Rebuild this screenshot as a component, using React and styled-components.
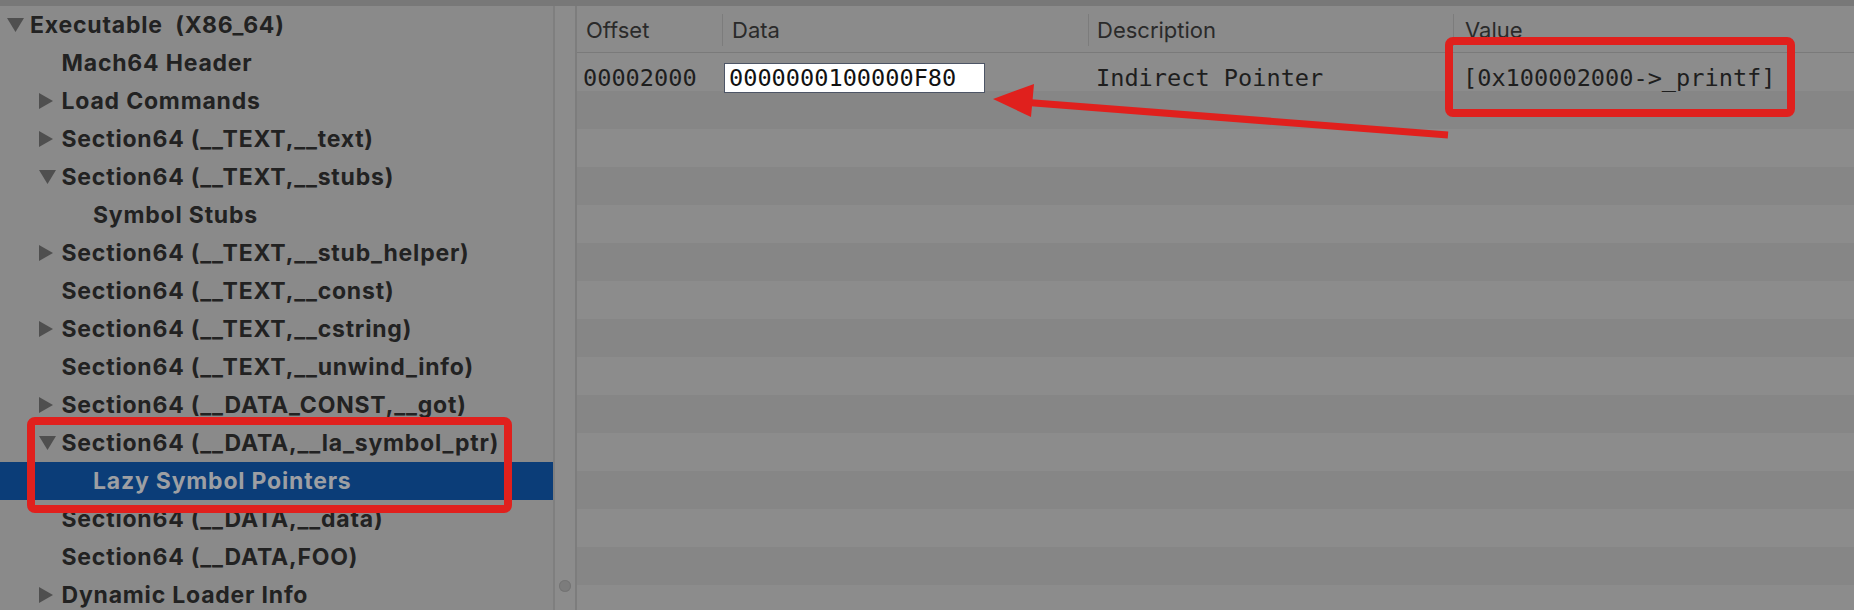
import React from 'react';
import styled, { createGlobalStyle } from 'styled-components';

const GlobalStyle = createGlobalStyle`
  html, body {
    margin: 0;
    padding: 0;
    background: #8a8a8a;
    overflow: hidden;
  }
`;

const Window = styled.div`
  position: relative;
  width: 1854px;
  height: 610px;
  display: flex;
  flex-direction: column;
  overflow: hidden;
  background: #8a8a8a;
`;

const TopBar = styled.div`
  height: 6px;
  flex: none;
  background: #787878;
`;

const Body = styled.div`
  flex: 1;
  display: flex;
  min-height: 0;
`;

const Sidebar = styled.div`
  width: 553px;
  flex: none;
  background: #8a8a8a;
  overflow: hidden;
`;

const TreeRow = styled.div`
  height: 38px;
  display: flex;
  align-items: center;
  padding-left: ${p => 5 + p.level * 31.5}px;
  background: ${p => (p.selected ? '#0b3d78' : 'transparent')};
  color: ${p => (p.selected ? '#9d9fa3' : '#222222')};
  font-family: Inter, "Liberation Sans", sans-serif;
  font-weight: 700;
  font-size: 23px;
  letter-spacing: 0.8px;
  white-space: pre;
`;

const Toggle = styled.span`
  width: 25px;
  flex: none;
  display: flex;
  align-items: center;
  padding-left: 2px;
  box-sizing: border-box;
`;

const Splitter = styled.div`
  width: 24px;
  flex: none;
  box-sizing: border-box;
  border-left: 2px solid #7f7f7f;
  border-right: 2px solid #7d7d7d;
  background: #8c8c8c;
  display: flex;
  flex-direction: column;
  justify-content: flex-end;
  align-items: center;
  padding-bottom: 18px;
`;

const Knob = styled.div`
  width: 12px;
  height: 12px;
  border-radius: 50%;
  background: #7c7c7c;
  box-shadow: inset 0 0 0 1px #747474;
`;

const TablePane = styled.div`
  flex: 1;
  display: flex;
  flex-direction: column;
  min-width: 0;
  overflow: hidden;
`;

const HeaderRow = styled.div`
  height: 46px;
  flex: none;
  display: flex;
  background: #8b8b8b;
  border-bottom: 1px solid #7a7a7a;
`;

const HeaderCell = styled.div`
  position: relative;
  width: ${p => (p.w ? `${p.w}px` : 'auto')};
  flex: ${p => (p.w ? 'none' : '1')};
  box-sizing: border-box;
  display: flex;
  align-items: center;
  padding-left: ${p => p.pad}px;
  padding-top: 2px;
  font-family: Inter, "Liberation Sans", sans-serif;
  font-size: 22px;
  color: #2a2a2a;

  &::before {
    content: '';
    display: ${p => (p.sep ? 'block' : 'none')};
    position: absolute;
    left: 0;
    top: 8px;
    bottom: 6px;
    width: 1px;
    background: #7c7c7c;
  }
`;

const DataRow = styled.div`
  position: relative;
  z-index: ${p => (p.raised ? 1 : 0)};
  height: 38px;
  flex: none;
  display: flex;
  background: ${p => (p.odd ? '#868686' : '#8c8c8c')};
`;

const Cell = styled.div`
  width: ${p => (p.w ? `${p.w}px` : 'auto')};
  flex: ${p => (p.w ? 'none' : '1')};
  box-sizing: border-box;
  display: flex;
  align-items: center;
  padding-left: ${p => p.pad}px;
  padding-top: 12px;
  font-family: "DejaVu Sans Mono", "Liberation Mono", monospace;
  font-size: 23.6px;
  line-height: 26px;
  color: #1e1e1e;
  white-space: pre;
`;

const EditField = styled.div`
  width: 261px;
  height: 30px;
  flex: none;
  box-sizing: border-box;
  background: #ffffff;
  border: 1.5px solid #4d5566;
  display: flex;
  align-items: center;
  padding-left: 4px;
  color: #111;
`;

const Overlay = styled.svg`
  position: absolute;
  top: 0;
  left: 0;
  z-index: 5;
  pointer-events: none;
`;

function Triangle({ open }) {
  return open ? (
    <svg width="17" height="14" viewBox="0 0 17 14">
      <polygon points="0,0 17,0 8.5,14" fill="#4f4f4f" />
    </svg>
  ) : (
    <svg width="14" height="16" viewBox="0 0 14 16">
      <polygon points="0,0 14,8 0,16" fill="#4f4f4f" />
    </svg>
  );
}

const tree = [
  { label: 'Executable  (X86_64)', level: 0, toggle: 'open' },
  { label: 'Mach64 Header', level: 1 },
  { label: 'Load Commands', level: 1, toggle: 'closed' },
  { label: 'Section64 (__TEXT,__text)', level: 1, toggle: 'closed' },
  { label: 'Section64 (__TEXT,__stubs)', level: 1, toggle: 'open' },
  { label: 'Symbol Stubs', level: 2 },
  { label: 'Section64 (__TEXT,__stub_helper)', level: 1, toggle: 'closed' },
  { label: 'Section64 (__TEXT,__const)', level: 1 },
  { label: 'Section64 (__TEXT,__cstring)', level: 1, toggle: 'closed' },
  { label: 'Section64 (__TEXT,__unwind_info)', level: 1 },
  { label: 'Section64 (__DATA_CONST,__got)', level: 1, toggle: 'closed' },
  { label: 'Section64 (__DATA,__la_symbol_ptr)', level: 1, toggle: 'open' },
  { label: 'Lazy Symbol Pointers', level: 2, selected: true },
  { label: 'Section64 (__DATA,__data)', level: 1 },
  { label: 'Section64 (__DATA,FOO)', level: 1 },
  { label: 'Dynamic Loader Info', level: 1, toggle: 'closed' },
];

const columns = [
  { title: 'Offset', w: 145, pad: 9, cellPad: 6 },
  { title: 'Data', w: 366, pad: 10, cellPad: 2, sep: true },
  { title: 'Description', w: 365, pad: 9, cellPad: 8, sep: true },
  { title: 'Value', pad: 12, cellPad: 10, sep: true },
];

export default function App() {
  return (
    <>
      <GlobalStyle />
      <Window>
        <TopBar />
        <Body>
          <Sidebar>
            {tree.map((item, i) => (
              <TreeRow key={i} level={item.level} selected={item.selected}>
                <Toggle>{item.toggle && <Triangle open={item.toggle === 'open'} />}</Toggle>
                {item.label}
              </TreeRow>
            ))}
          </Sidebar>
          <Splitter>
            <Knob />
          </Splitter>
          <TablePane>
            <HeaderRow>
              {columns.map(c => (
                <HeaderCell key={c.title} w={c.w} pad={c.pad} sep={c.sep}>{c.title}</HeaderCell>
              ))}
            </HeaderRow>
            <DataRow raised>
              <Cell w={columns[0].w} pad={columns[0].cellPad}>00002000</Cell>
              <Cell w={columns[1].w} pad={columns[1].cellPad}>
                <EditField>0000000100000F80</EditField>
              </Cell>
              <Cell w={columns[2].w} pad={columns[2].cellPad}>Indirect Pointer</Cell>
              <Cell pad={columns[3].cellPad}>[0x100002000-&gt;_printf]</Cell>
            </DataRow>
            {Array.from({ length: 14 }).map((_, i) => (
              <DataRow key={i} odd={i % 2 === 0} />
            ))}
          </TablePane>
        </Body>
        <Overlay width="1854" height="610" viewBox="0 0 1854 610">
          <rect x="31" y="421" width="477" height="88" rx="4" fill="none" stroke="#e0201d" strokeWidth="8" />
          <rect x="1449" y="41" width="342" height="72" rx="4" fill="none" stroke="#e0201d" strokeWidth="8" />
          <line x1="1448" y1="135" x2="1028" y2="102.5" stroke="#e0201d" strokeWidth="7" />
          <polygon points="993,99 1034,84 1031,117" fill="#e0201d" />
        </Overlay>
      </Window>
    </>
  );
}
